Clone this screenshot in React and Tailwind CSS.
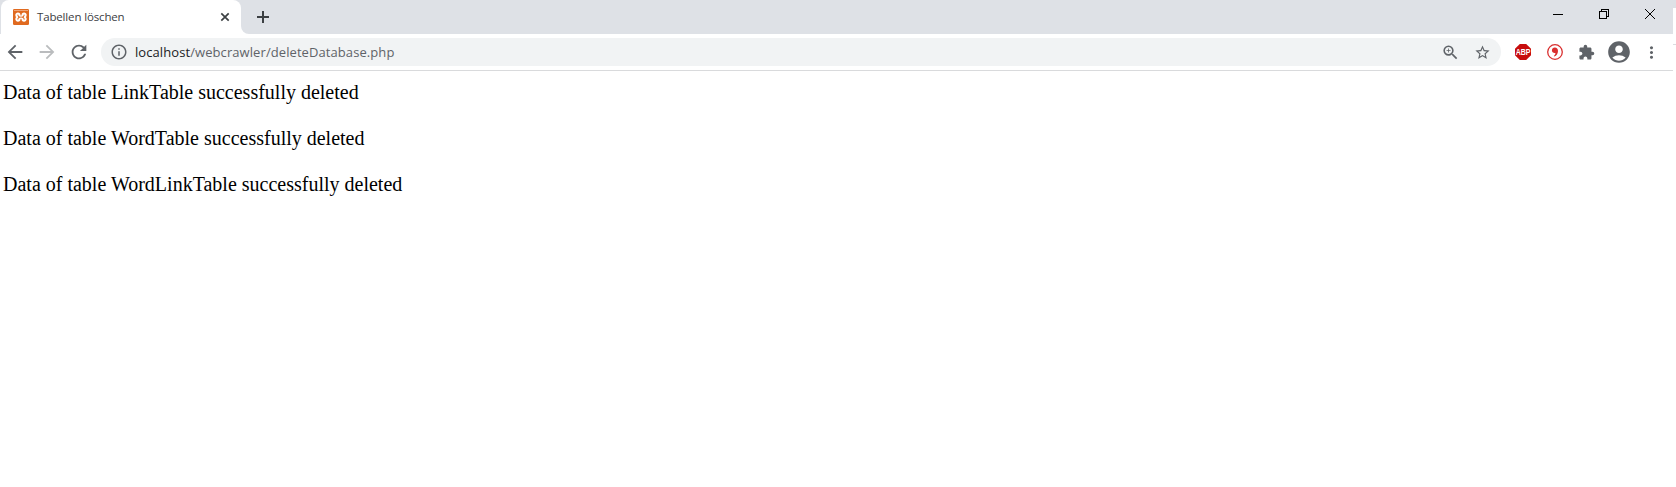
import {
  MdArrowBack, MdArrowForward, MdRefresh, MdOutlineInfo, MdOutlineZoomIn,
  MdStarBorder, MdExtension, MdAccountCircle, MdMoreVert,
} from 'react-icons/md';

function XamppIcon() {
  return (
    <svg className="size-4 shrink-0" viewBox="0 0 16 16">
      <rect width="16" height="16" rx="1.2" fill="#e06a20" />
      <rect x="1" y="1" width="14" height="1" fill="#f0a578" />
      <g fill="none" stroke="#fff" strokeWidth="2" strokeLinejoin="round" strokeLinecap="round">
        <path d="M6.500 6.200C6.500 4 3.300 3.900 3.300 6.100c0 .9.4 1.400 1 2-.6.6-1 1.100-1 2 0 2.200 3.200 2.100 3.200-.1" />
        <path d="M9.500 6.200c0-2.200 3.200-2.300 3.200-.1 0 .9-.4 1.400-1 2 .6.6 1 1.100 1 2 0 2.200-3.200 2.100-3.200-.1" />
        <path d="M6.500 6.400c.2.700.8.700 1.500.700s1.300 0 1.500-.7M6.500 9.800c.2-.7.8-.7 1.500-.7s1.300 0 1.500.7" strokeWidth="1.300" />
      </g>
    </svg>
  );
}

function TabStrip() {
  return (
    <header className="flex h-[34px] bg-[#dee1e6] pl-px">
      <div className="flex h-[34px] w-60 items-center rounded-t-lg bg-white pl-3 pr-[11px]">
        <XamppIcon />
        <span className="ml-2 flex-1 whitespace-nowrap text-[11.5px] leading-4 tracking-[-0.15px] text-[#3c4043]">Tabellen löschen</span>
        <svg className="size-[10px]" viewBox="0 0 10 10" stroke="#3c4043" strokeWidth="1.7"><path d="M1.300 1.300l7.400 7.400M8.700 1.300l-7.400 7.400" /></svg>
      </div>
      <div className="h-[34px] w-2 bg-white">
        <div className="size-full rounded-bl-lg bg-[#dee1e6]" />
      </div>
      <svg className="ml-2 mt-[11px] size-3" viewBox="0 0 12 12" stroke="#3c4043" strokeWidth="2"><path d="M6 0v12M0 6h12" /></svg>
      <div className="ml-auto flex h-[28px] items-center gap-9 pr-[18px]">
        <svg className="size-[10px]" viewBox="0 0 10 10" shapeRendering="crispEdges"><path d="M0 5h10v1H0z" /></svg>
        <svg className="size-[10px]" viewBox="0 0 10 10" fill="none" stroke="#000" shapeRendering="crispEdges"><path d="M.5 2.5h7v7h-7zM2.5 2.5v-2h7v7h-2" /></svg>
        <svg className="size-[10px]" viewBox="0 0 10 10" stroke="#000" strokeWidth="1"><path d="M0 0l10 10M10 0L0 10" /></svg>
      </div>
    </header>
  );
}

function Toolbar() {
  return (
    <nav className="flex h-9 items-center pl-[4px] text-[#5f6368]">
      <MdArrowBack size={22} />
      <MdArrowForward size={22} className="ml-[10px] text-[#babcbe]" />
      <MdRefresh size={22} className="ml-[10px]" />
      <div className="ml-[11px] flex h-7 w-[1400px] items-center rounded-full bg-[#f1f3f4] pl-[9px] pr-[10px]">
        <MdOutlineInfo size={18} />
        <span className="ml-[7px] flex-1 whitespace-nowrap text-[13px] leading-5 tracking-[0.08px]"><span className="text-[#202124]">localhost</span>/webcrawler/deleteDatabase.php</span>
        <MdOutlineZoomIn size={19} />
        <MdStarBorder size={17} className="ml-[14px]" />
      </div>
      <div className="ml-[14px] flex size-4 items-center justify-center bg-[#c70d0d] [clip-path:polygon(30%_0,70%_0,100%_30%,100%_70%,70%_100%,30%_100%,0_70%,0_30%)]">
        <span className="scale-y-[1.250] font-['Liberation_Sans',sans-serif] text-[7px] font-bold leading-[10px] tracking-[-0.1px] text-white">ABP</span>
      </div>
      <svg className="ml-4 size-4" viewBox="0 0 16 16">
        <circle cx="8" cy="8" r="7.3" fill="#fff" stroke="#d93030" strokeWidth="1.3" />
        <path d="M7.800 3.500c2 0 3.200 1.300 3.200 3.400 0 2.600-1.400 4.700-3.700 5.700l-.5-.6c1.100-.8 1.700-1.900 1.600-3-.3.100-.5.100-.8.100-1.500 0-2.700-1.100-2.700-2.800s1.200-2.800 2.900-2.800z" fill="#d93030" />
      </svg>
      <MdExtension size={17} className="ml-[15px]" />
      <MdAccountCircle size={26} className="ml-[11px]" />
      <MdMoreVert size={19} className="ml-[10px]" />
    </nav>
  );
}

export default function App() {
  return (
    <div className="flex h-[487px] w-[1676px] overflow-hidden bg-white font-['Open_Sans',sans-serif]">
      <div className="w-[1673px]">
        <TabStrip />
        <Toolbar />
        <div className="h-px bg-[#d9dadc]" />
        <main className="pl-[3px] pt-[10px] font-['Liberation_Serif',serif] text-[20px] leading-[23px] text-black">
          <p className="mb-[23px]">Data of table LinkTable successfully deleted</p>
          <p className="mb-[23px]">Data of table WordTable successfully deleted</p>
          <p>Data of table WordLinkTable successfully deleted</p>
        </main>
      </div>
      <div className="w-[3px]">
        <div className="h-2 bg-[#dee1e6]" />
        <div className="mt-9 h-px bg-[#dadce0]" />
      </div>
    </div>
  );
}
